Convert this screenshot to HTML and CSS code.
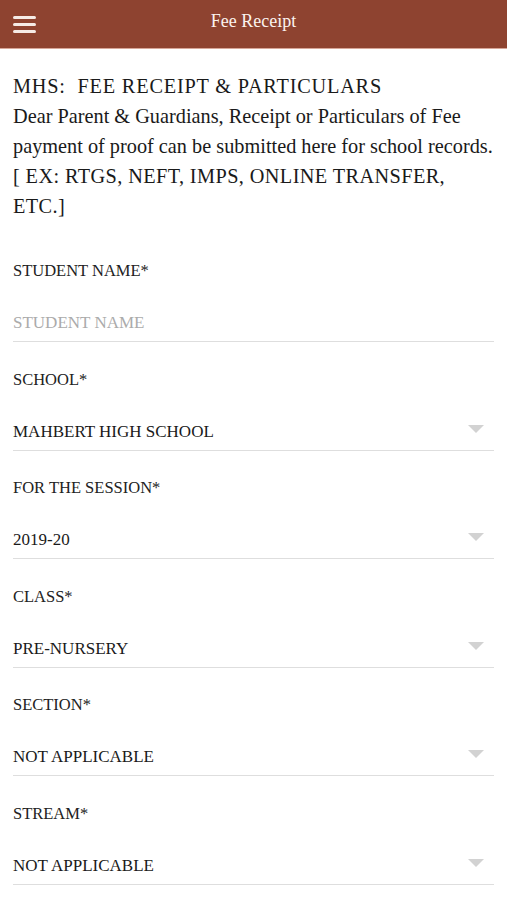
FILE: index.html
```html
<!DOCTYPE html>
<html>
<head>
<meta charset="utf-8">
<link rel="stylesheet" href="styles.css">
</head>
<body>
<header class="topbar">
  <div class="menu"><span></span><span></span><span></span></div>
  <h1 class="title">Fee Receipt</h1>
</header>
<main class="content">
  <p class="intro"><span class="heading">MHS:&nbsp; FEE RECEIPT &amp; PARTICULARS</span><br>Dear Parent &amp; Guardians, Receipt or Particulars of Fee<br>payment of proof can be submitted here for school records.<br><span class="caps">[ EX: RTGS, NEFT, IMPS, ONLINE TRANSFER,</span><br><span class="caps">ETC.]</span></p>
  <div class="field">
    <div class="label">STUDENT NAME*</div>
    <div class="value placeholder">STUDENT NAME</div>
  </div>
  <div class="field">
    <div class="label">SCHOOL*</div>
    <div class="value select">MAHBERT HIGH SCHOOL<span class="arrow"></span></div>
  </div>
  <div class="field">
    <div class="label">FOR THE SESSION*</div>
    <div class="value select">2019-20<span class="arrow"></span></div>
  </div>
  <div class="field">
    <div class="label">CLASS*</div>
    <div class="value select">PRE-NURSERY<span class="arrow"></span></div>
  </div>
  <div class="field">
    <div class="label">SECTION*</div>
    <div class="value select">NOT APPLICABLE<span class="arrow"></span></div>
  </div>
  <div class="field">
    <div class="label">STREAM*</div>
    <div class="value select">NOT APPLICABLE<span class="arrow"></span></div>
  </div>
</main>
</body>
</html>
```

FILE: styles.css
```css
html, body {
  margin: 0;
  padding: 0;
  background: #ffffff;
}
body {
  font-family: "Liberation Serif", "DejaVu Serif", serif;
  color: #1a1a1a;
  width: 507px;
  height: 900px;
  overflow: hidden;
}
.topbar {
  height: 48px;
  background: #8e4330;
  border-bottom: 1px solid #d7a698;
  display: flex;
  align-items: center;
  position: relative;
}
.menu {
  display: flex;
  flex-direction: column;
  gap: 4px;
  margin-left: 13px;
  margin-top: 1px;
}
.menu span {
  display: block;
  width: 23px;
  height: 3px;
  border-radius: 2px;
  background: #f6ebe6;
}
.title {
  position: absolute;
  left: 0;
  right: 0;
  top: 0;
  margin: 0;
  text-align: center;
  line-height: 42px;
  font-size: 18px;
  font-weight: normal;
  color: #fbf3ef;
}
.content {
  padding: 0 13px;
}
.intro {
  margin: 22px 0 0 0;
  font-size: 20.3px;
  line-height: 30px;
  color: #1a1a1a;
  white-space: nowrap;
}
.heading {
  letter-spacing: 0.8px;
}
.caps {
  letter-spacing: 0.4px;
}
.field {
  margin-top: 40px;
}
.field + .field {
  margin-top: 27.6px;
}
.label {
  font-size: 16.5px;
  line-height: 20px;
  color: #222;
}
.value {
  margin-top: 24px;
  height: 36px;
  line-height: 36px;
  font-size: 17px;
  color: #1a1a1a;
  border-bottom: 1px solid #dedede;
  display: flex;
  justify-content: space-between;
  align-items: center;
}
.placeholder {
  color: #ababab;
}
.arrow {
  width: 0;
  height: 0;
  border-left: 8px solid transparent;
  border-right: 8px solid transparent;
  border-top: 8px solid #d2d2d2;
  margin-right: 10px;
  margin-top: -6px;
}
```
